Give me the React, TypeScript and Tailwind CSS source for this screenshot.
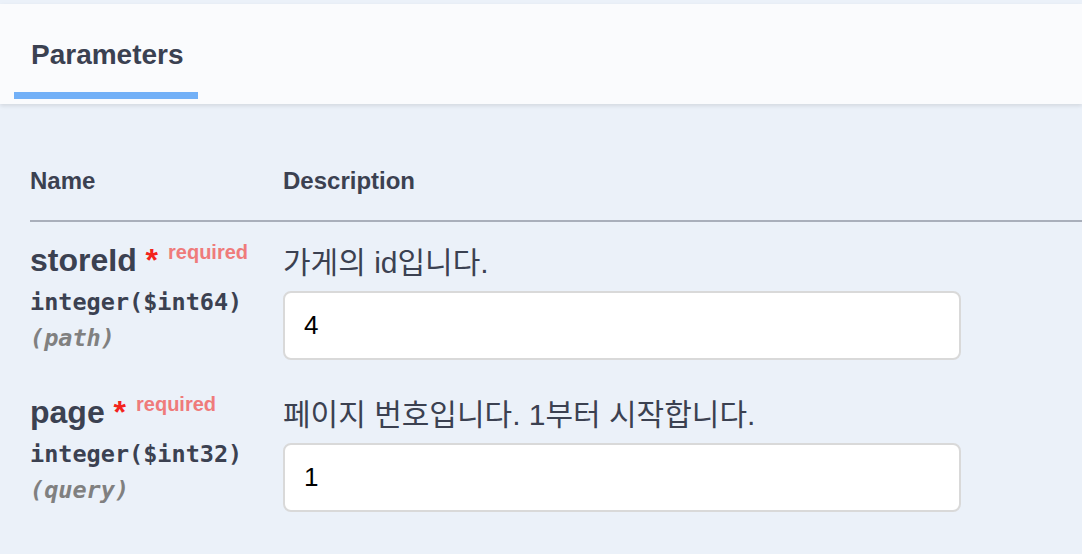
import React from "react";

type Param = {
	name: string;
	type: string;
	location: string;
	description: string;
	value: string;
};

const params: Param[] = [
	{ name: "storeId", type: "integer($int64)", location: "(path)", description: "가게의 id입니다.", value: "4" },
	{ name: "page", type: "integer($int32)", location: "(query)", description: "페이지 번호입니다. 1부터 시작합니다.", value: "1" },
];

const sans = "font-['Liberation_Sans','Noto_Sans_CJK_KR',Arial,sans-serif]";
const mono = "font-['DejaVu_Sans_Mono','Liberation_Mono',monospace]";

const ParamRow: React.FC<{ p: Param }> = ({ p }) => {
	return (
		<div className="flex pt-[20px] pb-[14px]">
			<div className="w-[253px] shrink-0 flex flex-col">
				<div className={`${sans} text-[32px] leading-[36px] font-bold text-[#3b4151] whitespace-nowrap`}>
					{p.name}
					<span className="text-[#f3231c]">&nbsp;*</span>
					<span className="relative -top-[12px] pl-[10px] text-[20px] text-[#ef7b7b]">required</span>
				</div>
				<div className={`${mono} text-[23.5px] leading-[28px] font-bold text-[#3b4151] pt-[6px]`}>{p.type}</div>
				<div className={`${mono} text-[23.5px] leading-[28px] font-bold italic text-[#808080] pt-[8px]`}>
					{p.location}
				</div>
			</div>
			<div className="flex flex-col">
				<div className={`${sans} text-[30px] leading-[40px] text-[#3b4151] pt-[1px]`}>{p.description}</div>
				<input
					readOnly
					value={p.value}
					className={`${sans} mt-[8px] w-[678px] h-[69px] rounded-[8px] border-2 border-[#d9d9d9] bg-white px-[19px] text-[26px] text-black outline-none`}
				/>
			</div>
		</div>
	);
};

export default function App() {
	return (
		<div className="w-[1082px] h-[554px] overflow-hidden bg-[#ebf1f9] pt-[4px]">
			<div className="h-[100px] bg-[#fafbfd] shadow-[0_2px_4px_rgba(0,0,0,0.1)] pl-[14px] pt-[35px] relative">
				<div className="inline-flex flex-col">
					<div className={`${sans} pl-[17px] pr-[14px] text-[28px] leading-[32px] font-bold text-[#3b4151]`}>Parameters</div>
					<div className="mt-[21px] h-[7px] bg-[#72b0f7]" />
				</div>
			</div>
			<div className="pl-[30px]">
				<div className={`${sans} flex pt-[63px] pb-[25px] border-b-2 border-[#a9afbb] text-[24px] leading-[28px] font-bold text-[#3b4151]`}>
					<div className="w-[253px]">Name</div>
					<div>Description</div>
				</div>
				{params.map((p) => (
					<ParamRow key={p.name} p={p} />
				))}
			</div>
		</div>
	);
}
